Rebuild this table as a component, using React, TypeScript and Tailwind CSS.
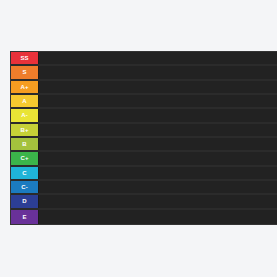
import React from 'react';

const tiers = [
  { label: 'SS', color: 'bg-[#e8313a]' },
  { label: 'S', color: 'bg-[#ef7d2b]' },
  { label: 'A+', color: 'bg-[#f59d21]' },
  { label: 'A', color: 'bg-[#f5c92f]' },
  { label: 'A-', color: 'bg-[#e9e435]' },
  { label: 'B+', color: 'bg-[#c6d137]' },
  { label: 'B', color: 'bg-[#a4c23d]' },
  { label: 'C+', color: 'bg-[#3bb54a]' },
  { label: 'C', color: 'bg-[#1fb4d8]' },
  { label: 'C-', color: 'bg-[#1b7bc0]' },
  { label: 'D', color: 'bg-[#2c3e95]' },
  { label: 'E', color: 'bg-[#693199]' },
];

const App = () => {
  return (
    <div className="w-[277px] h-[277px] overflow-hidden bg-[#f4f5f7] pt-[51px] pl-[10px]">
      <div className="w-[300px] border border-[#333333] bg-[#222222] flex flex-col">
        {tiers.map((tier, i) => (
          <div
            key={tier.label}
            className={`flex h-[14.33px] ${i < tiers.length - 1 ? 'border-b-2 border-[#2b2b2b]' : ''}`}
          >
            <div
              className={`${tier.color} w-[28px] h-full flex items-center justify-center border-r border-[#1a1a1a] text-white font-bold text-[6px] leading-none`}
              style={{ fontFamily: '"Liberation Sans", Arial, sans-serif' }}
            >
              {tier.label}
            </div>
            <div className="flex-1 bg-[#222222]" />
          </div>
        ))}
      </div>
    </div>
  );
};

export default App;
